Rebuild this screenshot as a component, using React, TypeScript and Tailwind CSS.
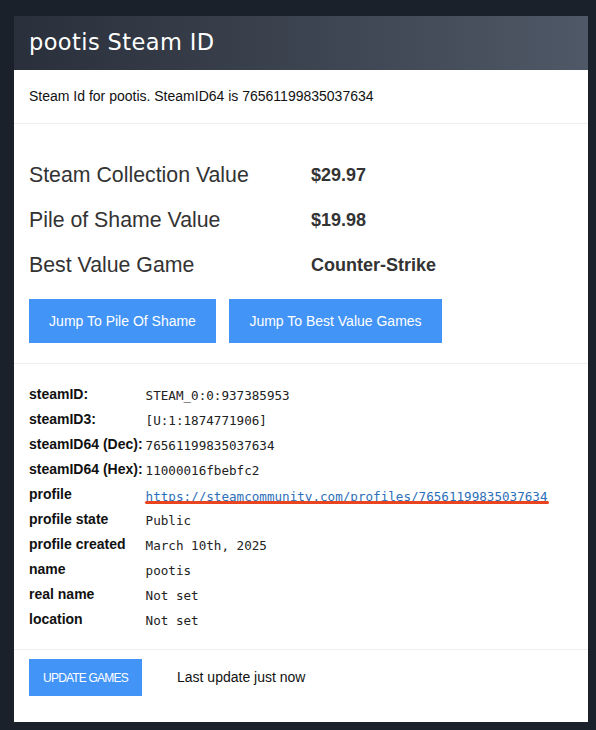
const rows: { label: string; value: string; link?: boolean }[] = [
  { label: "steamID:", value: "STEAM_0:0:937385953" },
  { label: "steamID3:", value: "[U:1:1874771906]" },
  { label: "steamID64 (Dec):", value: "76561199835037634" },
  { label: "steamID64 (Hex):", value: "11000016fbebfc2" },
  { label: "profile", value: "https://steamcommunity.com/profiles/76561199835037634", link: true },
  { label: "profile state", value: "Public" },
  { label: "profile created", value: "March 10th, 2025" },
  { label: "name", value: "pootis" },
  { label: "real name", value: "Not set" },
  { label: "location", value: "Not set" },
];

const stats = [
  { label: "Steam Collection Value", value: "$29.97" },
  { label: "Pile of Shame Value", value: "$19.98" },
  { label: "Best Value Game", value: "Counter-Strike" },
];

const sans = "font-['Liberation_Sans',Arial,sans-serif]";
const mono = "font-['DejaVu_Sans_Mono',monospace]";

export default function App() {
  return (
    <div className={`min-h-[730px] bg-[#1b212b] pt-4 pb-2 ${sans}`}>
      <div className="ml-[14px] w-[574px] bg-white">
        {/* header */}
        <div className="h-[54px] flex items-center px-[15px] bg-gradient-to-r from-[#2a303b] to-[#4f5866]">
          <h1 className="text-white text-[22.5px] font-['DejaVu_Sans',sans-serif] tracking-[0.4px]">
            pootis Steam ID
          </h1>
        </div>

        <div className="px-[15px] h-[54px] flex items-center border-b border-[#eeeeee] text-[14px] text-[#111]">
          Steam Id for pootis. SteamID64 is 76561199835037634
        </div>

        {/* values */}
        <div className="px-[15px] pt-[40px] pb-[20px] border-b border-[#eeeeee]">
          <div className="flex flex-col gap-[22px]">
            {stats.map((s) => (
              <div key={s.label} className="flex items-center h-[23px]">
                <span className="w-[282px] text-[21.3px] text-[#333]">{s.label}</span>
                <span className="text-[18px] font-bold text-[#333]">{s.value}</span>
              </div>
            ))}
          </div>
          <div className="flex gap-[13px] mt-[22px]">
            <button className="w-[187px] h-[44px] bg-[#4294f7] text-white text-[14px]">
              Jump To Pile Of Shame
            </button>
            <button className="w-[213px] h-[44px] bg-[#4294f7] text-white text-[14px]">
              Jump To Best Value Games
            </button>
          </div>
        </div>

        {/* id table */}
        <div className="px-[15px] pt-[19px] pb-[16px] border-b border-[#eeeeee] grid grid-cols-[auto_1fr] gap-x-[3px] auto-rows-[25px]">
          {rows.map((r) => (
            <div key={r.label} className="contents">
              <span className="whitespace-nowrap self-center text-[14px] font-bold text-[#111] pb-[2px]">
                {r.label}
              </span>
              {r.link ? (
                <span className="relative self-center justify-self-start">
                  <a href="#" className={`${mono} text-[12.6px] text-[#2d6fb8] underline`}>
                    {r.value}
                  </a>
                  <span className="absolute left-[-1px] right-[-2px] top-[17px] h-[3px] bg-[#e8441f] rounded-full" />
                </span>
              ) : (
                <span className={`${mono} self-center text-[12.6px] text-[#222] pt-[2px]`}>{r.value}</span>
              )}
            </div>
          ))}
        </div>

        {/* footer */}
        <div className="px-[15px] pt-[9px] pb-[26px] flex items-center gap-[35px]">
          <button className="w-[113px] h-[37px] bg-[#4294f7] text-white text-[12px] tracking-[-0.8px] uppercase">
            Update Games
          </button>
          <span className="text-[14px] text-[#111]">Last update just now</span>
        </div>
      </div>
    </div>
  );
}
